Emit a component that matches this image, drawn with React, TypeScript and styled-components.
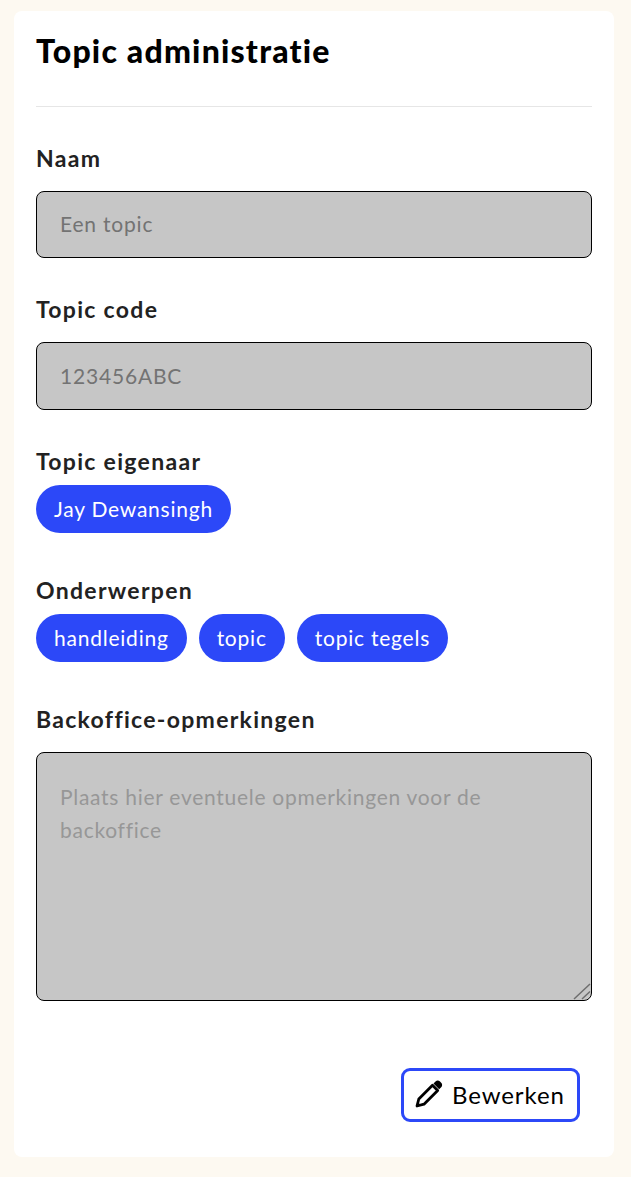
import React from "react";
import styled, { createGlobalStyle } from "styled-components";

const GlobalStyle = createGlobalStyle`
  html, body {
    margin: 0;
    padding: 0;
    background: #fdf9f1;
    font-family: Lato, "Noto Sans", sans-serif;
  }
  * {
    box-sizing: border-box;
  }
`;

const Page = styled.div`
  width: 631px;
  height: 1177px;
  padding: 11px 17px 20px 14px;
`;

const Card = styled.div`
  height: 1146px;
  background: white;
  border-radius: 8px;
  padding: 20px 22px 0;
  display: flex;
  flex-direction: column;
`;

const Title = styled.h1`
  margin: 0;
  height: 76px;
  font-size: 32px;
  line-height: 40px;
  font-weight: 900;
  letter-spacing: 1.2px;
  color: #000;
  border-bottom: 1px solid #e6e6e6;
`;

const Section = styled.div<{ $top: number }>`
  margin-top: ${(props) => props.$top}px;
  display: flex;
  flex-direction: column;
`;

const Label = styled.label`
  font-size: 23px;
  line-height: 26px;
  margin-bottom: 2px;
  font-weight: 700;
  letter-spacing: 1.3px;
  color: #222;
`;

const Input = styled.input<{ $height: number }>`
  margin-top: 18px;
  width: 100%;
  height: ${(props) => props.$height}px;
  padding: 0 23px 2px;
  background: #c6c6c6;
  border: 1px solid #000;
  border-radius: 8px;
  font-family: inherit;
  font-size: 21px;
  letter-spacing: 0.8px;
  &::placeholder {
    color: #737373;
    opacity: 1;
  }
`;

const TextAreaWrap = styled.div`
  position: relative;
  margin-top: 18px;
  height: 249px;
`;

const TextArea = styled.textarea`
  display: block;
  width: 100%;
  height: 100%;
  padding: 27px 23px;
  background: #c6c6c6;
  border: 1px solid #000;
  border-radius: 8px;
  font-family: inherit;
  font-size: 21px;
  line-height: 33px;
  letter-spacing: 0.72px;
  resize: none;
  &::placeholder {
    color: #979797;
    opacity: 1;
  }
`;

const ResizeGrip = styled.svg`
  position: absolute;
  right: 1px;
  bottom: 1px;
`;

const Tags = styled.div`
  margin-top: 9px;
  display: flex;
  gap: 12px;
`;

const Tag = styled.span`
  height: 48px;
  padding: 0 18px 2px;
  display: flex;
  align-items: center;
  background: #2c48f8;
  color: white;
  border-radius: 24px;
  font-size: 21px;
  letter-spacing: 0.77px;
`;

const Footer = styled.div`
  margin-top: 67px;
  padding-right: 12px;
  display: flex;
  justify-content: flex-end;
`;

const EditButton = styled.button`
  width: 179px;
  height: 54px;
  padding: 0 0 2px 11px;
  display: flex;
  align-items: center;
  gap: 9px;
  background: white;
  color: #000;
  border: 3px solid #2c48f8;
  border-radius: 9px;
  font-family: inherit;
  font-size: 24px;
  letter-spacing: 0.9px;
`;

const PencilIcon = () => (
  <svg width="28" height="28" viewBox="0 0 28 28" fill="none">
    <path
      d="M2 26l1.8-7L17.5 5.3l5.2 5.2L9 24.2 2 26z"
      stroke="#000"
      strokeWidth="2.8"
      strokeLinejoin="round"
    />
    <path
      d="M18.5 3.5l2-2c1.3-1.3 3.2-1.3 4.5 0l1.2 1.2c1.3 1.3 1.3 3.2 0 4.5l-2 2z"
      fill="#000"
    />
    <path d="M1.2 26.8l1.2-5 3.8 3.8z" fill="#000" />
  </svg>
);

const App = () => {
  return (
    <Page>
      <GlobalStyle />
      <Card>
        <Title>Topic administratie</Title>
        <Section $top={38}>
          <Label>Naam</Label>
          <Input $height={67} disabled placeholder="Een topic" />
        </Section>
        <Section $top={38}>
          <Label>Topic code</Label>
          <Input $height={68} disabled placeholder="123456ABC" />
        </Section>
        <Section $top={38}>
          <Label>Topic eigenaar</Label>
          <Tags>
            <Tag>Jay Dewansingh</Tag>
          </Tags>
        </Section>
        <Section $top={44}>
          <Label>Onderwerpen</Label>
          <Tags>
            <Tag>handleiding</Tag>
            <Tag>topic</Tag>
            <Tag>topic tegels</Tag>
          </Tags>
        </Section>
        <Section $top={44}>
          <Label>Backoffice-opmerkingen</Label>
          <TextAreaWrap>
            <TextArea
              disabled
              placeholder="Plaats hier eventuele opmerkingen voor de backoffice"
            />
            <ResizeGrip width="18" height="17" viewBox="0 0 18 17" fill="none">
              <path d="M1 16L17 1M9 16l8-7.5" stroke="#6e6e6e" strokeWidth="1.5" />
            </ResizeGrip>
          </TextAreaWrap>
        </Section>
        <Footer>
          <EditButton>
            <PencilIcon />
            Bewerken
          </EditButton>
        </Footer>
      </Card>
    </Page>
  );
};

export default App;
